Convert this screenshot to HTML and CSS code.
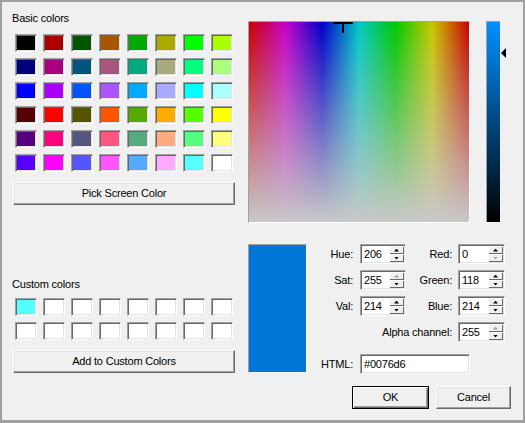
FILE: index.html
```html
<!DOCTYPE html>
<html>
<head>
<meta charset="utf-8">
<link rel="stylesheet" href="styles.css">
</head>
<body>
<div class="window">
  <div class="left">
    <div class="label first">Basic colors</div>
    <div class="grid">
      <div class="cell"><div class="sw" style="background:#000000"></div></div>
      <div class="cell"><div class="sw" style="background:#aa0000"></div></div>
      <div class="cell"><div class="sw" style="background:#005500"></div></div>
      <div class="cell"><div class="sw" style="background:#aa5500"></div></div>
      <div class="cell"><div class="sw" style="background:#00aa00"></div></div>
      <div class="cell"><div class="sw" style="background:#aaaa00"></div></div>
      <div class="cell"><div class="sw" style="background:#00ff00"></div></div>
      <div class="cell"><div class="sw" style="background:#aaff00"></div></div>

      <div class="cell"><div class="sw" style="background:#00007f"></div></div>
      <div class="cell"><div class="sw" style="background:#aa007f"></div></div>
      <div class="cell"><div class="sw" style="background:#00557f"></div></div>
      <div class="cell"><div class="sw" style="background:#aa557f"></div></div>
      <div class="cell"><div class="sw" style="background:#00aa7f"></div></div>
      <div class="cell"><div class="sw" style="background:#aaaa7f"></div></div>
      <div class="cell"><div class="sw" style="background:#00ff7f"></div></div>
      <div class="cell"><div class="sw" style="background:#aaff7f"></div></div>

      <div class="cell"><div class="sw" style="background:#0000ff"></div></div>
      <div class="cell"><div class="sw" style="background:#aa00ff"></div></div>
      <div class="cell"><div class="sw" style="background:#0055ff"></div></div>
      <div class="cell"><div class="sw" style="background:#aa55ff"></div></div>
      <div class="cell"><div class="sw" style="background:#00aaff"></div></div>
      <div class="cell"><div class="sw" style="background:#aaaaff"></div></div>
      <div class="cell"><div class="sw" style="background:#00ffff"></div></div>
      <div class="cell"><div class="sw" style="background:#aaffff"></div></div>

      <div class="cell"><div class="sw" style="background:#550000"></div></div>
      <div class="cell"><div class="sw" style="background:#ff0000"></div></div>
      <div class="cell"><div class="sw" style="background:#555500"></div></div>
      <div class="cell"><div class="sw" style="background:#ff5500"></div></div>
      <div class="cell"><div class="sw" style="background:#55aa00"></div></div>
      <div class="cell"><div class="sw" style="background:#ffaa00"></div></div>
      <div class="cell"><div class="sw" style="background:#55ff00"></div></div>
      <div class="cell"><div class="sw" style="background:#ffff00"></div></div>

      <div class="cell"><div class="sw" style="background:#55007f"></div></div>
      <div class="cell"><div class="sw" style="background:#ff007f"></div></div>
      <div class="cell"><div class="sw" style="background:#55557f"></div></div>
      <div class="cell"><div class="sw" style="background:#ff557f"></div></div>
      <div class="cell"><div class="sw" style="background:#55aa7f"></div></div>
      <div class="cell"><div class="sw" style="background:#ffaa7f"></div></div>
      <div class="cell"><div class="sw" style="background:#55ff7f"></div></div>
      <div class="cell"><div class="sw" style="background:#ffff7f"></div></div>

      <div class="cell"><div class="sw" style="background:#5500ff"></div></div>
      <div class="cell"><div class="sw" style="background:#ff00ff"></div></div>
      <div class="cell"><div class="sw" style="background:#5555ff"></div></div>
      <div class="cell"><div class="sw" style="background:#ff55ff"></div></div>
      <div class="cell"><div class="sw" style="background:#55aaff"></div></div>
      <div class="cell"><div class="sw" style="background:#ffaaff"></div></div>
      <div class="cell"><div class="sw" style="background:#55ffff"></div></div>
      <div class="cell"><div class="sw" style="background:#ffffff"></div></div>
    </div>
    <div class="btn wide">Pick Screen Color</div>

    <div class="label custom">Custom colors</div>
    <div class="grid custom-grid">
      <div class="cell"><div class="sw" style="background:#55ffff"></div></div>
      <div class="cell"><div class="sw empty"></div></div>
      <div class="cell"><div class="sw empty"></div></div>
      <div class="cell"><div class="sw empty"></div></div>
      <div class="cell"><div class="sw empty"></div></div>
      <div class="cell"><div class="sw empty"></div></div>
      <div class="cell"><div class="sw empty"></div></div>
      <div class="cell"><div class="sw empty"></div></div>
      <div class="cell"><div class="sw empty"></div></div>
      <div class="cell"><div class="sw empty"></div></div>
      <div class="cell"><div class="sw empty"></div></div>
      <div class="cell"><div class="sw empty"></div></div>
      <div class="cell"><div class="sw empty"></div></div>
      <div class="cell"><div class="sw empty"></div></div>
      <div class="cell"><div class="sw empty"></div></div>
      <div class="cell"><div class="sw empty"></div></div>
    </div>
    <div class="btn wide">Add to Custom Colors</div>
  </div>

  <div class="right">
    <div class="pickers">
      <div class="picker">
        <div class="field">
          <div class="cross-h"></div>
          <div class="cross-v"></div>
        </div>
      </div>
      <div class="lum">
        <div class="lum-bar"></div>
        <div class="lum-arrow"></div>
      </div>
    </div>

    <div class="editor">
      <div class="preview"></div>
      <div class="form">
        <div class="flabel">Hue:</div>
        <div class="spin"><span class="val">206</span><div class="sbtns"><div class="sb"><i class="up"></i></div><div class="sb"><i class="dn"></i></div></div></div>
        <div class="flabel l2">Red:</div>
        <div class="spin w47"><span class="val">0</span><div class="sbtns"><div class="sb"><i class="up"></i></div><div class="sb"><i class="dn off"></i></div></div></div>

        <div class="flabel">Sat:</div>
        <div class="spin"><span class="val">255</span><div class="sbtns"><div class="sb"><i class="up off"></i></div><div class="sb"><i class="dn"></i></div></div></div>
        <div class="flabel l2">Green:</div>
        <div class="spin w47"><span class="val">118</span><div class="sbtns"><div class="sb"><i class="up"></i></div><div class="sb"><i class="dn"></i></div></div></div>

        <div class="flabel">Val:</div>
        <div class="spin"><span class="val">214</span><div class="sbtns"><div class="sb"><i class="up"></i></div><div class="sb"><i class="dn"></i></div></div></div>
        <div class="flabel l2">Blue:</div>
        <div class="spin w47"><span class="val">214</span><div class="sbtns"><div class="sb"><i class="up"></i></div><div class="sb"><i class="dn"></i></div></div></div>

        <div class="flabel alpha">Alpha channel:</div>
        <div class="spin w47"><span class="val">255</span><div class="sbtns"><div class="sb"><i class="up off"></i></div><div class="sb"><i class="dn"></i></div></div></div>

        <div class="flabel html-label">HTML:</div>
        <div class="edit">#0076d6</div>
      </div>
    </div>

    <div class="buttons">
      <div class="btn ok">OK</div>
      <div class="btn cancel">Cancel</div>
    </div>
  </div>
</div>
</body>
</html>
```

FILE: styles.css
```css
html, body {
  margin: 0;
  padding: 0;
  background: #f0f0f0;
}

.window {
  width: 525px;
  height: 423px;
  box-sizing: border-box;
  border-style: solid;
  border-color: #a0a0a0;
  border-width: 2px 2px 3px 2px;
  background: #f0f0f0;
  display: flex;
  font-family: "Liberation Sans", Arial, sans-serif;
  font-size: 11px;
  letter-spacing: -0.2px;
  color: #000;
}

/* ---------- left column ---------- */
.left {
  margin-left: 10px;
  width: 224px;
  display: flex;
  flex-direction: column;
}

.label {
  height: 13px;
  line-height: 13px;
  white-space: nowrap;
}

.label.first {
  margin-top: 10px;
}

.label.custom {
  margin-top: 73px;
}

.grid {
  display: grid;
  grid-template-columns: repeat(8, 28px);
  grid-auto-rows: 24px;
  margin-top: 6px;
}

.custom-grid {
  margin-top: 4px;
}

.cell {
  display: flex;
  align-items: center;
  justify-content: center;
}

.sw {
  width: 22px;
  height: 18px;
  box-sizing: border-box;
  border: 1px solid;
  border-color: #a0a0a0 #ffffff #ffffff #a0a0a0;
  box-shadow: inset 1px 1px #696969, inset -1px -1px #e3e3e3;
}

.sw.empty {
  background: #ffffff;
}

/* ---------- buttons ---------- */
.btn {
  box-sizing: border-box;
  height: 23px;
  background: #f0f0f0;
  border: 1px solid;
  border-color: #ffffff #696969 #696969 #ffffff;
  box-shadow: inset -1px -1px #a0a0a0, inset 1px 1px #e3e3e3;
  display: flex;
  align-items: center;
  justify-content: center;
  line-height: 13px;
  white-space: nowrap;
}

.btn.wide {
  width: 222px;
  margin: 7px 0 0 1px;
}

/* ---------- right column ---------- */
.right {
  margin-left: 12px;
  flex: 1;
  display: flex;
  flex-direction: column;
}

.pickers {
  display: flex;
  margin-top: 19px;
}

.picker {
  width: 222px;
  height: 202px;
  box-sizing: border-box;
  border: 1px solid;
  border-color: #a0a0a0 #ffffff #ffffff #a0a0a0;
}

.field {
  position: relative;
  width: 220px;
  height: 200px;
  overflow: hidden;
  background:
    linear-gradient(to bottom, rgba(200, 200, 200, 0), rgb(200, 200, 200)),
    linear-gradient(to right,
      #c80000 0%,
      #c800c8 16.667%,
      #0000c8 33.333%,
      #00c8c8 50%,
      #00c800 66.667%,
      #c8c800 83.333%,
      #c80000 100%);
}

.cross-h {
  position: absolute;
  left: 84px;
  top: 0;
  width: 20px;
  height: 2px;
  background: #000;
}

.cross-v {
  position: absolute;
  left: 93px;
  top: -9px;
  width: 2px;
  height: 20px;
  background: #000;
}

.lum {
  position: relative;
  margin-left: 16px;
  width: 14px;
  height: 201px;
  box-sizing: border-box;
  border-left: 1px solid #a0a0a0;
  border-top: 1px solid #a0a0a0;
}

.lum-bar {
  width: 13px;
  height: 200px;
  background: linear-gradient(to bottom, #0090ff, #000000);
}

.lum-arrow {
  position: absolute;
  left: 14px;
  top: 26px;
  width: 0;
  height: 0;
  border-top: 5px solid transparent;
  border-bottom: 5px solid transparent;
  border-right: 5px solid #000;
}

/* ---------- editor ---------- */
.editor {
  display: flex;
  margin-top: 21px;
}

.preview {
  width: 59px;
  height: 129px;
  box-sizing: border-box;
  border: 1px solid;
  border-color: #a0a0a0 #ffffff #ffffff #a0a0a0;
  background: #0076d6;
}

.form {
  margin-left: 3px;
  display: grid;
  grid-template-columns: 50px 46px 52px 47px;
  grid-template-rows: repeat(5, 20px);
  row-gap: 6px;
  align-content: start;
}

.flabel {
  line-height: 20px;
  text-align: right;
  padding-right: 7px;
  white-space: nowrap;
}

.flabel.l2 {
  padding-right: 6px;
}

.flabel.alpha {
  grid-column: 1 / 4;
  padding-right: 6px;
}

.flabel.html-label {
  margin-top: 6px;
}

.spin {
  box-sizing: border-box;
  width: 46px;
  height: 20px;
  display: flex;
  padding: 1px;
  background: #ffffff;
  border: 1px solid;
  border-color: #a0a0a0 #ffffff #ffffff #a0a0a0;
  box-shadow: inset 1px 1px #696969, inset -1px -1px #e3e3e3;
}

.spin.w47 {
  width: 47px;
}

.val {
  flex: 1;
  padding-left: 2px;
  line-height: 16px;
}

.sbtns {
  width: 15px;
  display: flex;
  flex-direction: column;
}

.sb {
  height: 8px;
  box-sizing: border-box;
  background: #f0f0f0;
  box-shadow: inset 1px 1px #ffffff, inset -1px -1px #696969;
  display: flex;
  align-items: center;
  justify-content: center;
}

.sb i {
  display: block;
  width: 5px;
  height: 3px;
  background: #000;
}

.sb i.up {
  clip-path: polygon(50% 0, 100% 100%, 0 100%);
}

.sb i.dn {
  clip-path: polygon(0 0, 100% 0, 50% 100%);
}

.sb i.off {
  background: #a0a0a0;
}

.edit {
  grid-column: 2 / 5;
  margin-top: 6px;
  width: 110px;
  height: 20px;
  box-sizing: border-box;
  padding: 1px 1px 1px 3px;
  background: #ffffff;
  border: 1px solid;
  border-color: #a0a0a0 #ffffff #ffffff #a0a0a0;
  box-shadow: inset 1px 1px #696969, inset -1px -1px #e3e3e3;
  line-height: 16px;
}

/* ---------- dialog buttons ---------- */
.buttons {
  display: flex;
  justify-content: flex-end;
  gap: 7px;
  margin-top: 13px;
  margin-right: 12px;
}

.btn.ok {
  width: 77px;
  border-color: #000;
  box-shadow: inset 1px 1px #ffffff, inset -1px -1px #696969, inset -2px -2px #a0a0a0;
}

.btn.cancel {
  width: 75px;
}
```
